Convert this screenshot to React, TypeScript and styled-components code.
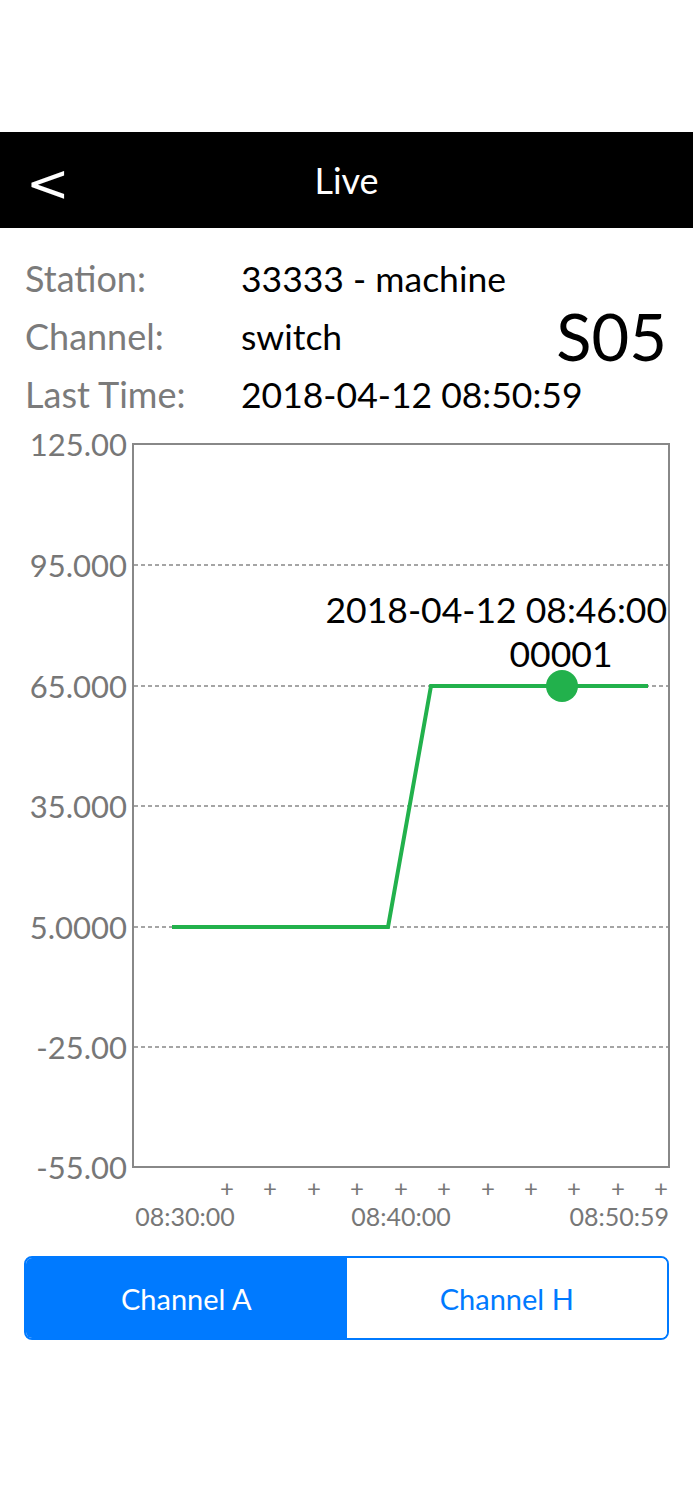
import React, { useState } from 'react';
import styled, { createGlobalStyle } from 'styled-components';

const GlobalStyle = createGlobalStyle`
  html, body {
    margin: 0;
    padding: 0;
    background: #ffffff;
  }
  body {
    font-family: Lato, "Noto Sans", "Liberation Sans", sans-serif;
  }
`;

const Page = styled.div`
  width: 693px;
  padding-top: 132px;
`;

const NavBar = styled.header`
  height: 96px;
  background: #000;
  color: #fff;
  display: grid;
  grid-template-columns: 80px 1fr 80px;
  align-items: center;
`;

const BackButton = styled.button`
  background: none;
  border: 0;
  color: #fff;
  font-family: "DejaVu Sans", sans-serif;
  font-size: 52px;
  font-weight: 400;
  padding: 6px 0 0 26px;
  text-align: left;
  line-height: 1;
  cursor: pointer;
`;

const NavTitle = styled.h1`
  margin: 0;
  text-align: center;
  font-size: 36px;
  font-weight: 400;
`;

const Info = styled.section`
  display: grid;
  grid-template-columns: 216px minmax(0, 1fr) auto;
  grid-auto-rows: 58px;
  align-items: center;
  padding: 21px 26px 0 25px;
`;

const Label = styled.span`
  grid-column: 1;
  color: #7b7b7b;
  font-size: 36px;
  white-space: nowrap;
`;

const Value = styled.span`
  grid-column: 2;
  color: #000;
  font-size: 35.5px;
  white-space: nowrap;
`;

const Code = styled.span`
  grid-column: 3;
  grid-row: 2;
  justify-self: end;
  font-size: 65px;
  color: #000;
  line-height: 1;
`;

const ChartSvg = styled.svg`
  display: block;
  font-family: Lato, "Noto Sans", "Liberation Sans", sans-serif;
`;

const Segmented = styled.div`
  display: grid;
  grid-template-columns: 1fr 1fr;
  margin: 21px 24px 0;
  height: 84px;
  border: 2px solid #007aff;
  border-radius: 8px;
  overflow: hidden;
  box-sizing: border-box;
`;

const Segment = styled.button<{ $active: boolean }>`
  border: 0;
  font-family: inherit;
  font-size: 29px;
  background: ${({ $active }) => ($active ? '#007aff' : '#fff')};
  color: ${({ $active }) => ($active ? '#fff' : '#007aff')};
  cursor: pointer;
`;

const GREEN = '#22b14c';
const GRID = '#888';
const AXIS_TEXT = '#777';

const yTicks = [
  { y: 444, label: '125.00' },
  { y: 565, label: '95.000' },
  { y: 686, label: '65.000' },
  { y: 806, label: '35.000' },
  { y: 927, label: '5.0000' },
  { y: 1047, label: '-25.00' },
  { y: 1167, label: '-55.00' },
];

const plusX = [227, 270, 314, 357, 401, 444, 488, 531, 574, 618, 661];

function LiveChart() {
  return (
    <ChartSvg width={693} height={812} viewBox="0 423 693 812">
      {yTicks.slice(1, -1).map((t) => (
        <line key={t.y} x1={134} x2={668} y1={t.y} y2={t.y} stroke={GRID} strokeWidth={1.5} strokeDasharray="4 3" />
      ))}
      <rect x={133} y={444} width={536} height={723} fill="none" stroke={GRID} strokeWidth={2} />
      {yTicks.map((t) => (
        <text key={t.label} x={127} y={t.y} textAnchor="end" dominantBaseline="central" fontSize={31} fill={AXIS_TEXT}>
          {t.label}
        </text>
      ))}
      <polyline points="172,927 388,927 431,686 648,686" fill="none" stroke={GREEN} strokeWidth={4} strokeLinejoin="miter" />
      <circle cx={562} cy={686} r={16} fill={GREEN} />
      <text x={667} y={609} textAnchor="end" dominantBaseline="central" fontSize={35.5} fill="#000">
        2018-04-12 08:46:00
      </text>
      <text x={561} y={653} textAnchor="middle" dominantBaseline="central" fontSize={35.5} fill="#000">
        00001
      </text>
      {plusX.map((x) => (
        <text key={x} x={x} y={1187} textAnchor="middle" dominantBaseline="central" fontSize={24} fill={AXIS_TEXT}>
          +
        </text>
      ))}
      <text x={185} y={1216} textAnchor="middle" dominantBaseline="central" fontSize={25} fill={AXIS_TEXT}>
        08:30:00
      </text>
      <text x={401} y={1216} textAnchor="middle" dominantBaseline="central" fontSize={25} fill={AXIS_TEXT}>
        08:40:00
      </text>
      <text x={669} y={1216} textAnchor="end" dominantBaseline="central" fontSize={25} fill={AXIS_TEXT}>
        08:50:59
      </text>
    </ChartSvg>
  );
}

export default function App() {
  const [channel, setChannel] = useState<'A' | 'H'>('A');

  return (
    <Page>
      <GlobalStyle />
      <NavBar>
        <BackButton aria-label="Back">&lt;</BackButton>
        <NavTitle>Live</NavTitle>
        <span />
      </NavBar>
      <Info>
        <Label>Station:</Label>
        <Value>33333 - machine</Value>
        <Label>Channel:</Label>
        <Value>switch</Value>
        <Code>S05</Code>
        <Label>Last Time:</Label>
        <Value>2018-04-12 08:50:59</Value>
      </Info>
      <LiveChart />
      <Segmented>
        <Segment $active={channel === 'A'} onClick={() => setChannel('A')}>
          Channel A
        </Segment>
        <Segment $active={channel === 'H'} onClick={() => setChannel('H')}>
          Channel H
        </Segment>
      </Segmented>
    </Page>
  );
}
